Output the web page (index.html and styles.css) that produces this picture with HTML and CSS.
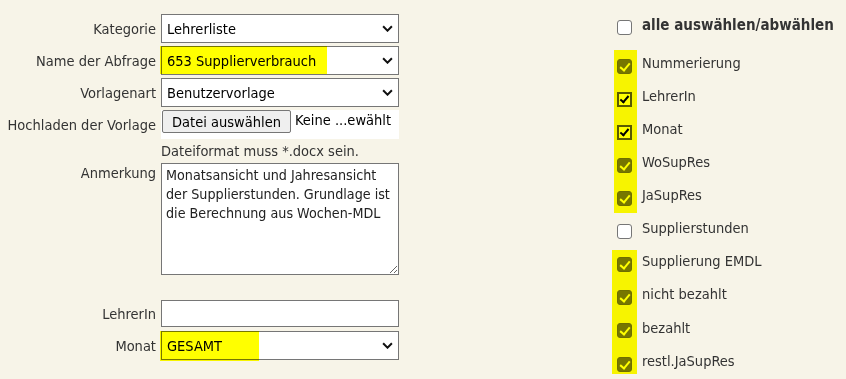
FILE: index.html
```html
<!DOCTYPE html>
<html lang="de">
<head>
<meta charset="utf-8">
<title>Abfrage</title>
<link rel="stylesheet" href="styles.css">
</head>
<body>
<div class="page">
  <form class="form">
    <label class="lbl">Kategorie</label>
    <div class="sel"><select><option>Lehrerliste</option></select><svg class="chev" viewBox="0 0 10 6" width="11" height="7"><path d="M1 1l4 4 4-4" fill="none" stroke="#111" stroke-width="1.8"/></svg></div>

    <label class="lbl">Name der Abfrage</label>
    <div class="sel"><select><option>653 Supplierverbrauch</option></select><svg class="chev" viewBox="0 0 10 6" width="11" height="7"><path d="M1 1l4 4 4-4" fill="none" stroke="#111" stroke-width="1.8"/></svg></div>

    <label class="lbl">Vorlagenart</label>
    <div class="sel"><select><option>Benutzervorlage</option></select><svg class="chev" viewBox="0 0 10 6" width="11" height="7"><path d="M1 1l4 4 4-4" fill="none" stroke="#111" stroke-width="1.8"/></svg></div>

    <label class="lbl">Hochladen der Vorlage</label>
    <div class="file"><button type="button" class="filebtn">Datei auswählen</button><span class="filename">Keine ...ewählt</span></div>

    <span></span>
    <div class="hint">Dateiformat muss *.docx sein.</div>

    <label class="lbl top">Anmerkung</label>
    <textarea class="area">Monatsansicht und Jahresansicht der Supplierstunden. Grundlage ist die Berechnung aus Wochen-MDL</textarea>

    <label class="lbl spaced">LehrerIn</label>
    <input class="txt spaced" type="text">

    <label class="lbl">Monat</label>
    <div class="sel"><select><option>GESAMT</option></select><svg class="chev" viewBox="0 0 10 6" width="11" height="7"><path d="M1 1l4 4 4-4" fill="none" stroke="#111" stroke-width="1.8"/></svg></div>
  </form>

  <div class="checks">
    <label class="row head"><input type="checkbox" class="cb"><span>alle auswählen/abwählen</span></label>
    <div class="list">
      <label class="row"><input type="checkbox" class="cb on" checked><span>Nummerierung</span></label>
      <label class="row"><input type="checkbox" class="cb classic" checked><span>LehrerIn</span></label>
      <label class="row"><input type="checkbox" class="cb classic" checked><span>Monat</span></label>
      <label class="row"><input type="checkbox" class="cb on" checked><span>WoSupRes</span></label>
      <label class="row"><input type="checkbox" class="cb on" checked><span>JaSupRes</span></label>
      <label class="row"><input type="checkbox" class="cb"><span>Supplierstunden</span></label>
      <label class="row"><input type="checkbox" class="cb on" checked><span>Supplierung EMDL</span></label>
      <label class="row"><input type="checkbox" class="cb on" checked><span>nicht bezahlt</span></label>
      <label class="row"><input type="checkbox" class="cb on" checked><span>bezahlt</span></label>
      <label class="row"><input type="checkbox" class="cb on" checked><span>restl.JaSupRes</span></label>
    </div>
  </div>
</div>

<div class="hl hl-name"></div>
<div class="hl hl-monat"></div>
<div class="hl hl-strip1"></div>
<div class="hl hl-strip2"></div>
</body>
</html>
```

FILE: styles.css
```css
html, body {
  margin: 0;
  padding: 0;
  background: #f7f4e8;
}
body {
  font-family: "DejaVu Sans Condensed", "DejaVu Sans", sans-serif;
  font-size: 14.5px;
  color: #333;
  width: 846px;
  height: 379px;
  overflow: hidden;
  position: relative;
}
.page {
  display: flex;
  align-items: flex-start;
}
.form {
  display: grid;
  grid-template-columns: 156px 238px;
  column-gap: 5px;
  row-gap: 3px;
  padding-top: 14px;
  width: 399px;
  align-items: center;
}
.lbl {
  text-align: right;
  white-space: nowrap;
  color: #333;
}
.lbl.top {
  align-self: start;
  padding-top: 2px;
}
.spaced {
  margin-top: 22px;
}
.sel {
  position: relative;
  height: 29px;
}
.sel select {
  appearance: none;
  -webkit-appearance: none;
  width: 100%;
  height: 29px;
  box-sizing: border-box;
  border: 1px solid #767676;
  border-radius: 0;
  background: #fff;
  font-family: inherit;
  font-size: 14.5px;
  color: #000;
  padding: 0 0 0 5px;
  margin: 0;
}
.chev {
  position: absolute;
  right: 6px;
  top: 11px;
  pointer-events: none;
}
.file {
  display: flex;
  align-items: flex-start;
  background: #fff;
  height: 29px;
  box-sizing: border-box;
  padding-left: 1px;
}
.filebtn {
  font-family: inherit;
  font-size: 14.5px;
  color: #000;
  background: #efefef;
  border: 1px solid #767676;
  border-radius: 2px;
  height: 23px;
  width: 129px;
  padding: 0;
  margin: 0;
}
.filename {
  margin-left: 4px;
  margin-top: 2px;
  color: #000;
}
.hint {
  margin-top: 1px;
  color: #333;
  line-height: 17px;
}
.area {
  box-sizing: border-box;
  width: 238px;
  height: 112px;
  margin: 0;
  border: 1px solid #767676;
  background: #fff;
  font-family: inherit;
  font-size: 14.2px;
  line-height: 19px;
  color: #222;
  padding: 2px 3px 2px 4px;
  resize: both;
}
.txt {
  box-sizing: border-box;
  width: 238px;
  height: 27px;
  border: 1px solid #767676;
  background: #fff;
  margin-bottom: 1px;
}
.checks {
  margin-left: 215px;
  padding-top: 12px;
}
.row {
  display: flex;
  align-items: center;
  height: 33px;
  gap: 10px;
  color: #333;
  white-space: nowrap;
}
.row span {
  margin-top: -3px;
}
.row.head {
  height: 28px;
  font-weight: bold;
  font-size: 15px;
  color: #333;
}
.list {
  margin-top: 8px;
}
.list .row:nth-child(n+8) {
  height: 33.5px;
}
.cb {
  appearance: none;
  -webkit-appearance: none;
  width: 15px;
  height: 15px;
  margin: 3px 0 0 3px;
  box-sizing: border-box;
  border: 1px solid #767676;
  border-radius: 3px;
  background: #fff;
  position: relative;
  flex: none;
}
.cb.on {
  background: #767676;
  border-color: #6e6e6e;
}
.cb.on::after {
  content: "";
  position: absolute;
  left: 4px;
  top: 1px;
  width: 4px;
  height: 8px;
  border: solid #fff;
  border-width: 0 2px 2px 0;
  transform: rotate(40deg);
}
.cb.classic {
  border-radius: 0;
  border: 2px solid #5a5a5a;
  background: #fff;
}
.cb.classic::after {
  content: "";
  position: absolute;
  left: 3px;
  top: 0px;
  width: 3px;
  height: 7px;
  border: solid #000;
  border-width: 0 2.5px 2.5px 0;
  transform: rotate(40deg);
}
.hl {
  position: absolute;
  background: #ffff00;
  mix-blend-mode: multiply;
  pointer-events: none;
}
.hl-name { left: 160px; top: 46px; width: 167px; height: 28px; }
.hl-monat { left: 160px; top: 331px; width: 99px; height: 30px; }
.hl-strip1 { left: 614px; top: 50px; width: 23px; height: 163px; }
.hl-strip2 { left: 612px; top: 250px; width: 25px; height: 124px; }
```
